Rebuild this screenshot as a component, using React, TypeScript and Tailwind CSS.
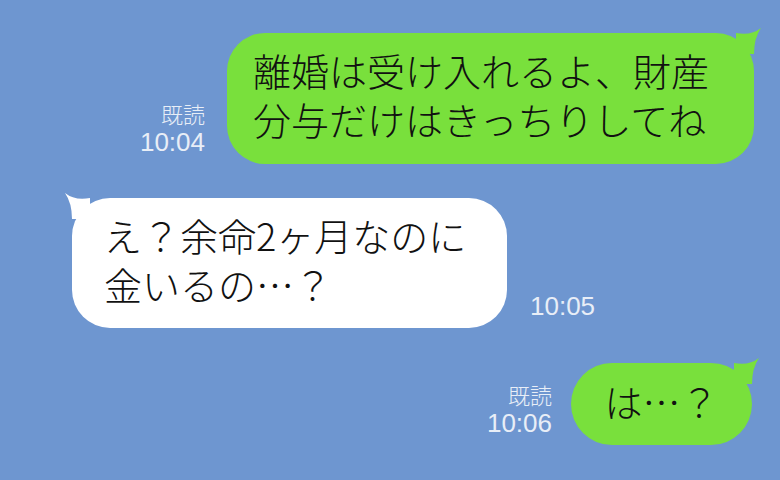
import React from 'react';

const jp = { fontFamily: '"Noto Sans CJK JP", "Noto Sans", sans-serif' };
const num = { fontFamily: '"Liberation Sans", Arial, sans-serif' };

const TailRight: React.FC<{ color: string }> = ({ color }) => (
  <svg className="absolute right-[-8px] top-[-5px]" width="26" height="30" viewBox="0 0 26 30">
    <path d="M0 5 Q15 8 25 0 Q18 10 18 26 L0 26 Z" fill={color} />
  </svg>
);

const TailLeft: React.FC<{ color: string }> = ({ color }) => (
  <svg className="absolute left-[-8px] top-[-5px]" width="26" height="30" viewBox="0 0 26 30">
    <path d="M26 5 Q11 8 1 0 Q8 10 8 26 L26 26 Z" fill={color} />
  </svg>
);

const Meta: React.FC<{ read?: boolean; time: string; align: 'left' | 'right' }> = ({ read, time, align }) => (
  <div className={`mb-[7px] flex flex-col font-light text-[#e8eef7] ${align === 'right' ? 'items-end' : 'items-start'}`}>
    {read && (
      <span className="text-[22px] leading-[29px]" style={jp}>
        既読
      </span>
    )}
    <span className="text-[26px] leading-[29px]" style={num}>
      {time}
    </span>
  </div>
);

const Lines: React.FC<{ lines: string[] }> = ({ lines }) => (
  <div className="relative flex flex-col font-light text-[#111]" style={jp}>
    {lines.map((line) => (
      <span key={line} className="h-[49px] whitespace-nowrap text-[38px] leading-[49px]">
        {line}
      </span>
    ))}
  </div>
);

export default function App() {
  return (
    <div className="flex h-[480px] w-[780px] flex-col overflow-hidden bg-[#6e96d0] pt-[33px]">
      <div className="flex items-end justify-end gap-[22px] pr-[26px]">
        <Meta read time="10:04" align="right" />
        <div className="relative h-[131px] w-[527px] rounded-[38px] bg-[#79e03c] pl-[26px] pt-[12px]">
          <TailRight color="#79e03c" />
          <Lines lines={['離婚は受け入れるよ、財産', '分与だけはきっちりしてね']} />
        </div>
      </div>

      <div className="mt-[34px] flex items-end gap-[23px] pl-[72px]">
        <div className="relative h-[130px] w-[435px] rounded-[38px] bg-white pl-[32px] pt-[12px]">
          <TailLeft color="#ffffff" />
          <Lines lines={['え？余命2ヶ月なのに', '金いるの…？']} />
        </div>
        <Meta time="10:05" align="left" />
      </div>

      <div className="mt-[35px] flex items-end justify-end gap-[19px] pr-[28px]">
        <Meta read time="10:06" align="right" />
        <div className="relative flex h-[82px] w-[181px] justify-center rounded-[41px] bg-[#79e03c] pt-[13px]">
          <TailRight color="#79e03c" />
          <Lines lines={['は…？']} />
        </div>
      </div>
    </div>
  );
}
